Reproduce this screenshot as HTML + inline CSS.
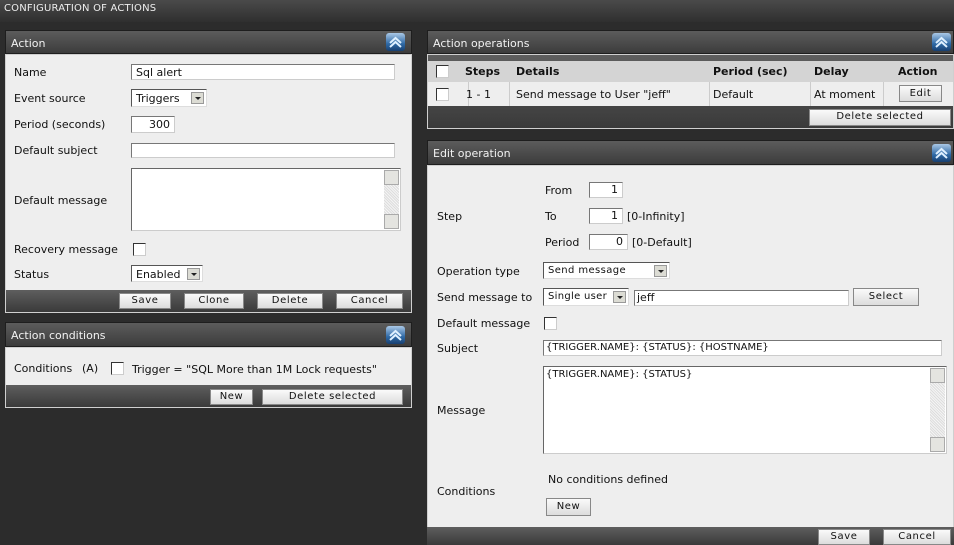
<!DOCTYPE html>
<html><head><meta charset="utf-8"><style>
*{box-sizing:border-box;margin:0;padding:0}
body{width:954px;height:545px;background:#2c2c2c;font-family:"DejaVu Sans","Liberation Sans",sans-serif;font-size:11px;color:#111;position:relative;overflow:hidden}
.a{position:absolute}
.top{left:0;top:0;width:954px;height:22px;background:linear-gradient(#4a4a4a,#2f2f2f);color:#eee;font-size:10px;padding:3px 0 0 4px;letter-spacing:.2px}
.hdr{background:linear-gradient(#5c5c5c,#3c3c3c);color:#f2f2f2;padding:6px 0 0 5px;border:1px solid #1e1e1e}
.body{background:#eeeeee}
.ftr{background:linear-gradient(#5e5e5e,#3a3a3a)}
.frame{border:1px solid #cfcfcf}
.inp{background:#fff;border:1px solid #777;border-right-color:#ccc;border-bottom-color:#ccc;padding:1px 4px;font-size:11px}
.sel{background:#fff;border:1px solid #555;border-right-color:#ddd;border-bottom-color:#ddd;padding:2px 4px 0}
.sel i{position:absolute;right:2px;top:2px;width:13px;height:12px;background:#dcdcd4;border:1px solid #999}
.sel i:after{content:"";position:absolute;left:3px;top:4px;border:3px solid transparent;border-top:3px solid #222;border-bottom:0}
.btn{background:linear-gradient(#fafafa,#dcdcdc);border:1px solid #888;text-align:center;font-size:10px;letter-spacing:.6px;padding-top:1px;color:#111}
.cb{width:13px;height:13px;background:#fff;border:1px solid #333;border-right-color:#ccc;border-bottom-color:#ccc}
.ic{width:19px;height:18px;border-radius:3px;background:linear-gradient(#aac8e6,#2f6aa6 60%,#173f70)}
.ic svg{position:absolute;left:0;top:0}
.ta{background:#fff;border:1px solid #666;border-right-color:#ccc;border-bottom-color:#ccc}
.sb{position:absolute;right:1px;top:1px;bottom:1px;width:15px;background:repeating-linear-gradient(45deg,#ddd 0 1px,#f4f4f4 1px 2px)}
.sb b{position:absolute;left:0;width:15px;height:15px;background:#e4e4e0;border:1px solid #aaa}
</style></head><body>
<div class="a top">CONFIGURATION OF ACTIONS</div>

<div class="a hdr" style="left:5px;top:30px;width:407px;height:24px">Action</div>
<div class="a ic" style="left:386px;top:33px"><svg width="19" height="18"><path d="M4 10l5.5-5 5.5 5M4 14l5.5-5 5.5 5" stroke="#dff0ff" stroke-width="2" fill="none"/></svg></div>
<div class="a body frame" style="left:5px;top:54px;width:407px;height:237px;border-bottom:0"></div>
<div class="a" style="left:14px;top:66px">Name</div>
<div class="a inp" style="left:131px;top:64px;width:264px;height:16px">Sql alert</div>
<div class="a" style="left:14px;top:92px">Event source</div>
<div class="a sel" style="left:131px;top:89px;width:76px;height:18px">Triggers<i></i></div>
<div class="a" style="left:14px;top:118px">Period (seconds)</div>
<div class="a inp" style="left:131px;top:116px;width:44px;height:17px;text-align:right">300</div>
<div class="a" style="left:14px;top:144px">Default subject</div>
<div class="a inp" style="left:131px;top:143px;width:264px;height:15px"></div>
<div class="a" style="left:14px;top:194px">Default message</div>
<div class="a ta" style="left:131px;top:168px;width:270px;height:63px"><div class="sb"><b style="top:0"></b><b style="bottom:0"></b></div></div>
<div class="a" style="left:14px;top:243px">Recovery message</div>
<div class="a cb" style="left:133px;top:243px"></div>
<div class="a" style="left:14px;top:268px">Status</div>
<div class="a sel" style="left:131px;top:265px;width:72px;height:17px">Enabled<i></i></div>
<div class="a ftr frame" style="left:5px;top:290px;width:407px;height:23px;border-top:0"></div>
<div class="a btn" style="left:119px;top:293px;width:52px;height:16px">Save</div>
<div class="a btn" style="left:184px;top:293px;width:60px;height:16px">Clone</div>
<div class="a btn" style="left:257px;top:293px;width:66px;height:16px">Delete</div>
<div class="a btn" style="left:336px;top:293px;width:67px;height:16px">Cancel</div>

<div class="a hdr" style="left:5px;top:322px;width:407px;height:25px">Action conditions</div>
<div class="a ic" style="left:386px;top:326px"><svg width="19" height="18"><path d="M4 10l5.5-5 5.5 5M4 14l5.5-5 5.5 5" stroke="#dff0ff" stroke-width="2" fill="none"/></svg></div>
<div class="a body frame" style="left:5px;top:347px;width:407px;height:39px;border-bottom:0"></div>
<div class="a" style="left:14px;top:362px">Conditions</div>
<div class="a" style="left:82px;top:362px">(A)</div>
<div class="a cb" style="left:111px;top:362px"></div>
<div class="a" style="left:132px;top:363px">Trigger = "SQL More than 1M Lock requests"</div>
<div class="a ftr frame" style="left:5px;top:385px;width:407px;height:23px;border-top:0"></div>
<div class="a btn" style="left:210px;top:389px;width:43px;height:16px">New</div>
<div class="a btn" style="left:262px;top:389px;width:141px;height:16px">Delete selected</div>

<div class="a hdr" style="left:427px;top:30px;width:527px;height:24px">Action operations</div>
<div class="a ic" style="left:932px;top:33px"><svg width="19" height="18"><path d="M4 10l5.5-5 5.5 5M4 14l5.5-5 5.5 5" stroke="#dff0ff" stroke-width="2" fill="none"/></svg></div>
<div class="a frame ftr" style="left:427px;top:54px;width:527px;height:75px"></div>
<div class="a" style="left:428px;top:61px;width:525px;height:21px;background:#d4d4d4"></div>
<div class="a" style="left:428px;top:82px;width:525px;height:24px;background:#eee"></div>
<div class="a" style="left:468px;top:82px;width:1px;height:24px;background:#ccc"></div>
<div class="a" style="left:509px;top:82px;width:1px;height:24px;background:#ccc"></div>
<div class="a" style="left:709px;top:82px;width:1px;height:24px;background:#ccc"></div>
<div class="a" style="left:810px;top:82px;width:1px;height:24px;background:#ccc"></div>
<div class="a" style="left:883px;top:82px;width:1px;height:24px;background:#ccc"></div>
<div class="a cb" style="left:436px;top:65px"></div>
<div class="a" style="left:465px;top:65px;font-weight:bold">Steps</div>
<div class="a" style="left:516px;top:65px;font-weight:bold">Details</div>
<div class="a" style="left:713px;top:65px;font-weight:bold">Period (sec)</div>
<div class="a" style="left:814px;top:65px;font-weight:bold">Delay</div>
<div class="a" style="left:898px;top:65px;font-weight:bold">Action</div>
<div class="a cb" style="left:436px;top:88px"></div>
<div class="a" style="left:466px;top:88px">1 - 1</div>
<div class="a" style="left:516px;top:88px">Send message to User "jeff"</div>
<div class="a" style="left:713px;top:88px">Default</div>
<div class="a" style="left:814px;top:88px">At moment</div>
<div class="a btn" style="left:899px;top:85px;width:43px;height:17px;padding-top:2px">Edit</div>
<div class="a btn" style="left:809px;top:109px;width:142px;height:17px">Delete selected</div>

<div class="a hdr" style="left:427px;top:140px;width:527px;height:25px">Edit operation</div>
<div class="a ic" style="left:932px;top:144px"><svg width="19" height="18"><path d="M4 10l5.5-5 5.5 5M4 14l5.5-5 5.5 5" stroke="#dff0ff" stroke-width="2" fill="none"/></svg></div>
<div class="a body frame" style="left:427px;top:165px;width:527px;height:363px;border-bottom:0"></div>
<div class="a" style="left:545px;top:184px">From</div>
<div class="a inp" style="left:589px;top:182px;width:34px;height:16px;text-align:right;padding-top:0">1</div>
<div class="a" style="left:437px;top:210px">Step</div>
<div class="a" style="left:545px;top:210px">To</div>
<div class="a inp" style="left:589px;top:208px;width:34px;height:16px;text-align:right;padding-top:0">1</div>
<div class="a" style="left:627px;top:210px">[0-Infinity]</div>
<div class="a" style="left:545px;top:236px">Period</div>
<div class="a inp" style="left:589px;top:234px;width:39px;height:16px;text-align:right;padding-top:0">0</div>
<div class="a" style="left:632px;top:236px">[0-Default]</div>
<div class="a" style="left:437px;top:265px">Operation type</div>
<div class="a sel" style="left:543px;top:262px;width:127px;height:17px;font-size:10px;letter-spacing:.4px">Send message<i></i></div>
<div class="a" style="left:437px;top:291px">Send message to</div>
<div class="a sel" style="left:543px;top:288px;width:86px;height:18px;font-size:10px;letter-spacing:.3px">Single user<i></i></div>
<div class="a inp" style="left:634px;top:290px;width:215px;height:16px;padding:0 2px">jeff</div>
<div class="a btn" style="left:853px;top:288px;width:66px;height:18px;padding-top:2px">Select</div>
<div class="a" style="left:437px;top:317px">Default message</div>
<div class="a cb" style="left:544px;top:317px"></div>
<div class="a" style="left:437px;top:342px">Subject</div>
<div class="a inp" style="left:543px;top:340px;width:399px;height:16px;font-size:10px;padding:1px 2px">{TRIGGER.NAME}: {STATUS}: {HOSTNAME}</div>
<div class="a" style="left:437px;top:404px">Message</div>
<div class="a ta" style="left:543px;top:366px;width:404px;height:88px;font-size:10px;padding:2px 2px">{TRIGGER.NAME}: {STATUS}<div class="sb"><b style="top:0"></b><b style="bottom:0"></b></div></div>
<div class="a" style="left:548px;top:473px">No conditions defined</div>
<div class="a" style="left:437px;top:485px">Conditions</div>
<div class="a btn" style="left:546px;top:498px;width:45px;height:18px;padding-top:2px">New</div>
<div class="a ftr" style="left:427px;top:527px;width:527px;height:18px"></div>
<div class="a btn" style="left:818px;top:529px;width:52px;height:16px">Save</div>
<div class="a btn" style="left:883px;top:529px;width:68px;height:16px">Cancel</div>
</body></html>
